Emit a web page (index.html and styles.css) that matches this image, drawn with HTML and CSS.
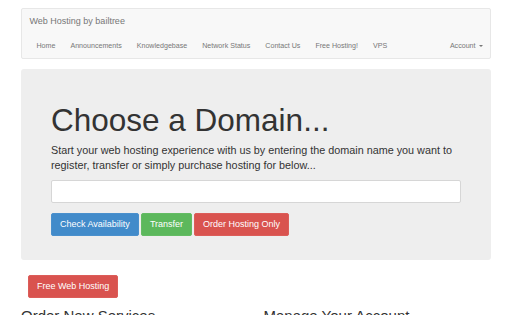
FILE: index.html
```html
<!DOCTYPE html>
<html lang="en">
<head>
  <meta charset="UTF-8" />
  <meta name="viewport" content="width=device-width, initial-scale=1.0" />
  <title>Web Hosting by bailtree</title>
  <link rel="stylesheet" href="styles.css">
</head>
<body>
  <div class="container">
    <nav class="navbar">
      <div class="navbar-header">
        <a class="navbar-brand" href="#">Web Hosting by bailtree</a>
      </div>
      <ul class="nav">
        <li><a href="#">Home</a></li>
        <li><a href="#">Announcements</a></li>
        <li><a href="#">Knowledgebase</a></li>
        <li><a href="#">Network Status</a></li>
        <li><a href="#">Contact Us</a></li>
        <li><a href="#">Free Hosting!</a></li>
        <li><a href="#">VPS</a></li>
        <li class="nav-right"><a href="#">Account <span class="caret"></span></a></li>
      </ul>
    </nav>

    <div class="jumbotron">
      <h1>Choose a Domain...</h1>
      <p>Start your web hosting experience with us by entering the domain name you want to register, transfer or simply purchase hosting for below...</p>
      <form>
        <input type="text" class="form-control">
        <div class="actions">
          <button type="button" class="btn btn-primary">Check Availability</button>
          <button type="button" class="btn btn-success">Transfer</button>
          <button type="button" class="btn btn-danger">Order Hosting Only</button>
        </div>
      </form>
    </div>

    <div class="promo">
      <a href="#" class="btn btn-danger">Free Web Hosting</a>
    </div>

    <div class="row">
      <div class="col">
        <h2>Order New Services</h2>
      </div>
      <div class="col">
        <h2>Manage Your Account</h2>
      </div>
    </div>
  </div>
</body>
</html>
```

FILE: styles.css
```css
body {
  margin: 0;
  font-family: "Liberation Sans", Arial, sans-serif;
  font-size: 7px;
  line-height: 10px;
  color: #333;
  background: #fff;
}
a {
  text-decoration: none;
}
.container {
  width: 470px;
  padding: 8px 7.5px 0;
  margin: 0 auto;
}
.navbar {
  background: #f8f8f8;
  border: 1px solid #e7e7e7;
  border-radius: 2px;
  margin-bottom: 10px;
}
.navbar-brand {
  display: block;
  height: 25px;
  line-height: 25px;
  padding: 0 7.5px;
  font-size: 9px;
  color: #777;
}
.nav {
  display: flex;
  list-style: none;
  margin: 0;
  padding: 0 0 0 7px;
  font-size: 7.1px;
}
.nav a {
  display: block;
  line-height: 24px;
  padding: 0 7.5px;
  color: #777;
}
.nav-right {
  margin-left: auto;
}
.caret {
  display: inline-block;
  width: 0;
  height: 0;
  margin-left: 1px;
  vertical-align: middle;
  border-top: 2px solid #777;
  border-left: 2px solid transparent;
  border-right: 2px solid transparent;
}
.jumbotron {
  background: #eee;
  padding: 24px 30px;
  margin-bottom: 15px;
  border-radius: 3px;
}
.jumbotron h1 {
  font-size: 31.5px;
  font-weight: normal;
  line-height: 1.1;
  margin: 10px 0 5px;
}
.jumbotron p {
  font-size: 10.8px;
  line-height: 15px;
  margin: 0 0 7.5px;
}
.jumbotron form {
  margin: 0;
}
.form-control {
  display: block;
  box-sizing: border-box;
  width: 100%;
  height: 23px;
  margin: 0 0 10px;
  padding: 0 8px;
  border: 1px solid #d6d6d6;
  border-radius: 2px;
  background: #fff;
  font-family: inherit;
  font-size: 9px;
}
.actions {
  display: flex;
  gap: 2px;
}
.btn {
  display: inline-block;
  box-sizing: border-box;
  height: 23px;
  padding: 0 8px;
  border: 1px solid transparent;
  border-radius: 2px;
  font-family: inherit;
  font-size: 9px;
  line-height: 21px;
  color: #fff;
  cursor: pointer;
}
.btn-primary {
  background: #428bca;
  border-color: #4a90cd;
}
.btn-success {
  background: #5cb85c;
  border-color: #64bc64;
}
.btn-danger {
  background: #d9534f;
  border-color: #dc5d59;
}
.promo {
  padding: 0 7px;
}
.row {
  display: flex;
  margin: 0 -7.5px;
}
.col {
  flex: 1;
  padding: 0 7.5px;
}
.col h2 {
  font-size: 15px;
  font-weight: normal;
  line-height: 1.1;
  margin: 10px 0 5px;
}
```
